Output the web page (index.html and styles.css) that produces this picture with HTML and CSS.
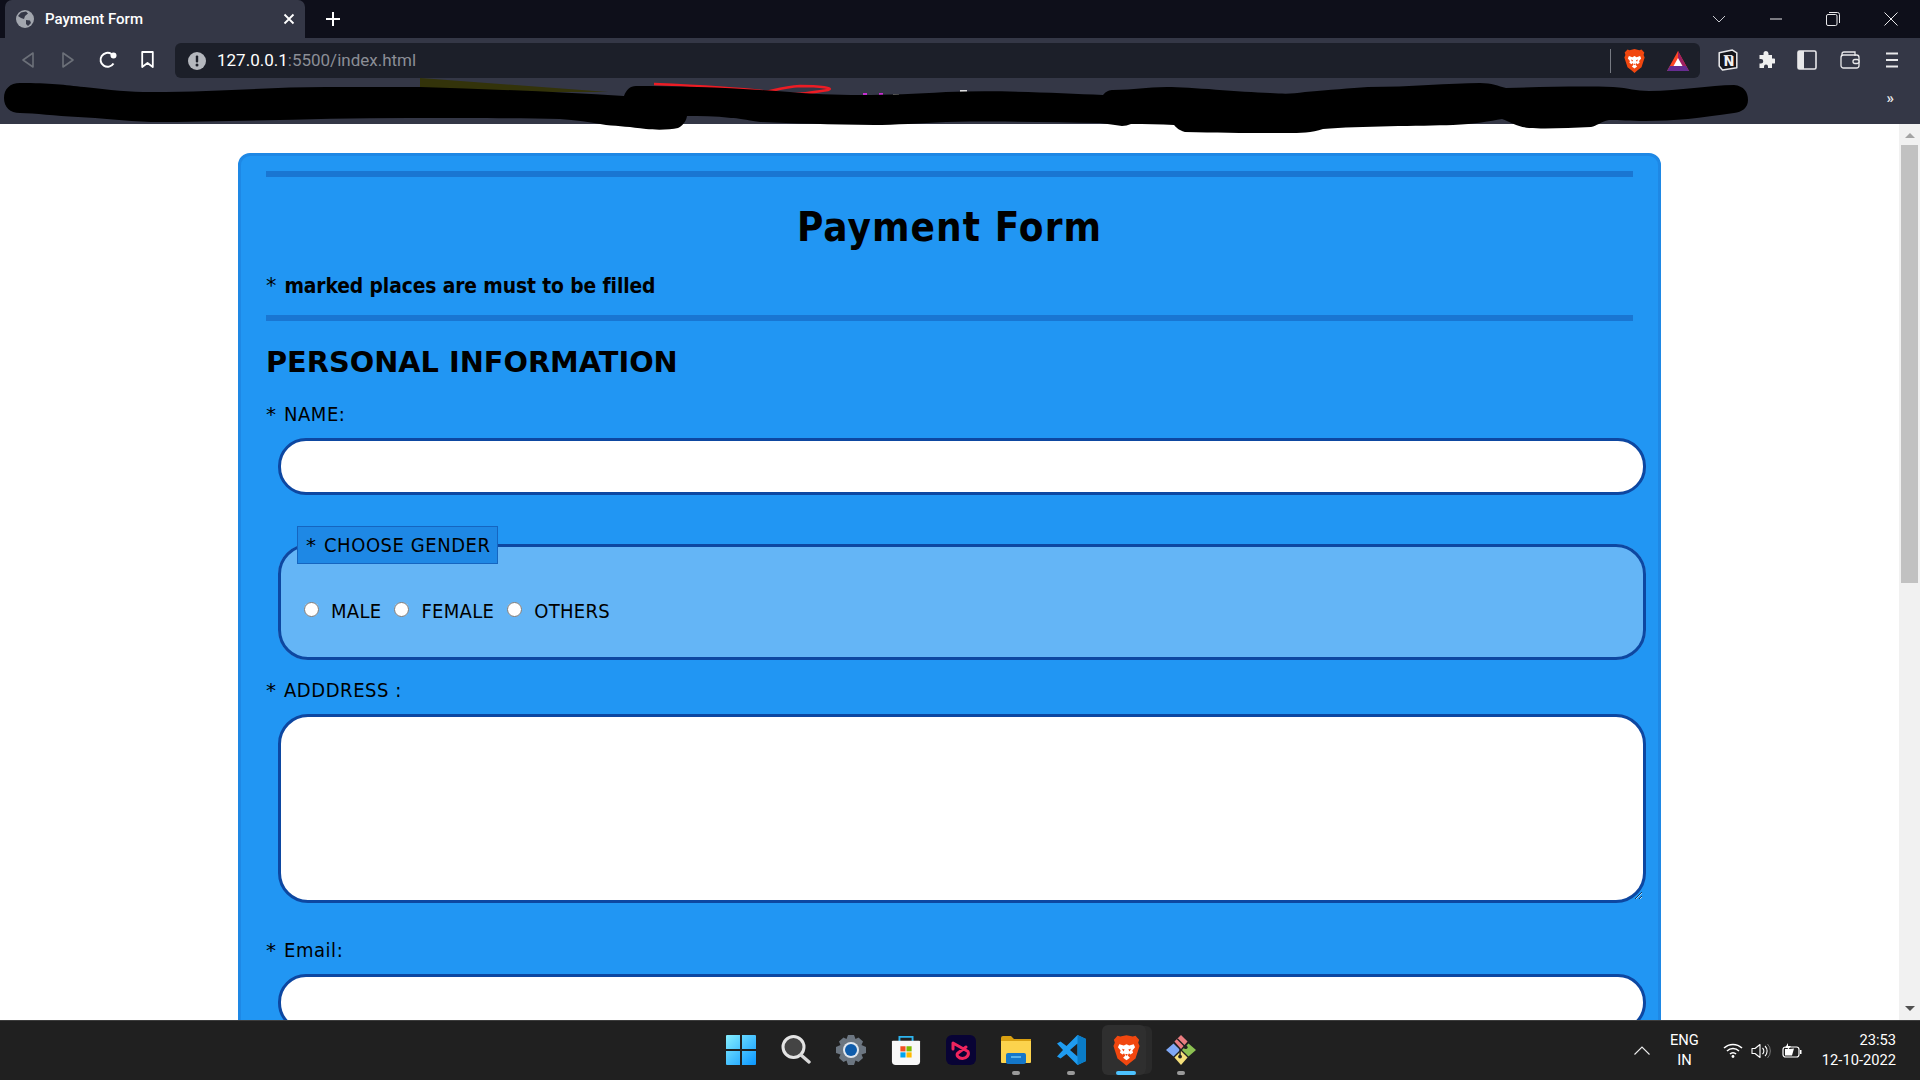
FILE: index.html
```html
<!DOCTYPE html>
<html lang="en">
<head>
<meta charset="utf-8">
<title>Payment Form</title>
<link rel="stylesheet" href="styles.css">
</head>
<body>
<svg class="defs" width="0" height="0" aria-hidden="true">
  <symbol id="brave" viewBox="0 0 30 34">
    <path fill="#f1470f" d="M15 0l7 1.500 3-.8 4 4.300-1 3.500 1.500 3.500-4.500 14-6 4.500L15 34l-4-3.500-6-4.500-4.500-14L2 8.500 1 5 5 .7l3 .8z"/>
    <path fill="#fff" d="M15 10l-3 1.500-5-1.500-1.500 3.500 3 3.500-.8 2.500 3 2 1.500-1.500 1.500 2.500-2.500 2.500 3.800 2.800 3.800-2.800-2.500-2.500 1.500-2.500 1.500 1.500 3-2-.8-2.500 3-3.500L23 10l-5 1.500z"/>
    <path fill="#f1470f" d="M10 15l3 1-1.500 2zM20 15l-3 1 1.500 2zM13.500 21h3L15 23z"/>
  </symbol>
</svg>

<header class="tabstrip">
  <div class="tab">
    <svg class="favicon" viewBox="0 0 18 18"><circle cx="9" cy="9" r="9" fill="#a2a6ae"/><path fill="#343746" d="M5 2.500l5-1 2 2-3 2.500-1 3-3-1-3-2zM10 10l4 .5 1 2.500-3 3-2-2z"/></svg>
    <span class="tab-title">Payment Form</span>
    <svg class="tab-close" viewBox="0 0 12 12"><path d="M1.500 1.500l9 9M10.500 1.500l-9 9" stroke="#fff" stroke-width="1.800"/></svg>
  </div>
  <svg class="new-tab" viewBox="0 0 14 14"><path d="M7 0v14M0 7h14" stroke="#fff" stroke-width="2"/></svg>
  <div class="window-controls">
    <svg class="win-ico win-chev" viewBox="0 0 14 8"><path d="M1 1l6 6 6-6" fill="none" stroke="#c8c9cf"/></svg>
    <svg class="win-ico win-min" viewBox="0 0 14 14"><path d="M1 7h12" stroke="#e8e8ea" stroke-width="1"/></svg>
    <svg class="win-ico win-max" viewBox="0 0 14 14"><rect x=".5" y="2.500" width="10.500" height="11" rx="1.500" fill="none" stroke="#e8e8ea"/><path d="M3 .5h8.500a2 2 0 0 1 2 2V11" fill="none" stroke="#e8e8ea"/></svg>
    <svg class="win-ico win-close" viewBox="0 0 14 14"><path d="M.5.5l13 13M13.500.5l-13 13" stroke="#e8e8ea"/></svg>
  </div>
</header>

<nav class="toolbar">
  <svg class="tb tb-back" viewBox="0 0 12 16"><path d="M11 1v14L1 8z" fill="none" stroke="#6c7079" stroke-width="1.600" stroke-linejoin="round"/></svg>
  <svg class="tb tb-fwd" viewBox="0 0 12 16"><path d="M1 1v14l10-7z" fill="none" stroke="#6c7079" stroke-width="1.600" stroke-linejoin="round"/></svg>
  <svg class="tb tb-reload" viewBox="0 0 18 18"><path d="M14.500 12.500A7 7 0 1 1 12.500 3" fill="none" stroke="#fff" stroke-width="2"/><circle cx="14.500" cy="4.500" r="3" fill="#fff"/></svg>
  <svg class="tb tb-mark" viewBox="0 0 13 17"><path d="M1.200 1h10.600v15l-5.300-4-5.300 4z" fill="none" stroke="#fff" stroke-width="1.800" stroke-linejoin="round"/></svg>
  <div class="omnibox">
    <svg class="info" viewBox="0 0 18 18"><circle cx="9" cy="9" r="9" fill="#b4b7bd"/><rect x="7.800" y="3.500" width="2.400" height="7" rx="1" fill="#1c1f29"/><circle cx="9" cy="13" r="1.500" fill="#1c1f29"/></svg>
    <span class="url"><span class="url-host">127.0.0.1</span>:5500/index.html</span>
    <span class="omni-sep"></span>
    <svg class="omni-brave"><use href="#brave"/></svg>
    <svg class="omni-bat" viewBox="0 0 22 20"><path d="M11 0l11 20H0z" fill="#ff4724"/><path d="M11 0l11 20H11z" fill="#9e1f63"/><path d="M0 20l3-5h16l3 5z" fill="#662d91"/><path d="M11 7l4.500 8h-9z" fill="#fff"/></svg>
  </div>
  <svg class="tb tb-notion" viewBox="0 0 20 20"><path d="M2 3.500L14 1l4 2.500V17l-13 2-3-3.500z" fill="#14151b" stroke="#e8e8ea" stroke-width="1.400" stroke-linejoin="round"/><path d="M6 6h8" stroke="#e8e8ea"/><text class="notion-n" x="11" y="15.500" text-anchor="middle">N</text></svg>
  <svg class="tb tb-puzzle" viewBox="0 0 18 18"><path fill="#f0f0f0" d="M6.500 2.500a2.500 2.500 0 0 1 5 0V4H15v3.500h1.500a2.500 2.500 0 0 1 0 5H15V17h-4v-1.500a2 2 0 0 0-4 0V17H2.500v-4.500H4a2.200 2.200 0 0 0 0-4.500H2.500V4h4z"/></svg>
  <svg class="tb tb-side" viewBox="0 0 20 20"><rect x="1" y="1" width="18" height="18" rx="1.500" fill="none" stroke="#e8e8ea" stroke-width="1.600"/><rect x="1" y="1" width="6" height="18" fill="#e8e8ea"/></svg>
  <svg class="tb tb-wallet" viewBox="0 0 20 18"><path d="M2 5V3a2 2 0 0 1 2-2h11v4" fill="none" stroke="#e8e8ea" stroke-width="1.300"/><rect x="1" y="4" width="18" height="13" rx="2.500" fill="none" stroke="#e8e8ea" stroke-width="1.300"/><rect x="13" y="8.500" width="6" height="4" rx="2" fill="#343746" stroke="#e8e8ea" stroke-width="1.300"/></svg>
  <svg class="tb tb-menu" viewBox="0 0 14 16"><path d="M1 1.500h12M1 8h12M1 14.500h12" stroke="#e8e8ea" stroke-width="1.800"/></svg>
</nav>

<div class="bookmarks"><span class="more">»</span></div>

<main class="viewport">
  <div class="page">
    <form class="card">
      <hr class="rule rule-top">
      <h1 class="title">Payment Form</h1>
      <p class="note"><span class="star">*</span>marked places are must to be filled</p>
      <hr class="rule rule-second">
      <h2 class="section">PERSONAL INFORMATION</h2>

      <label class="field-label field-label-name" for="name"><span class="star">*</span>NAME:</label>
      <input class="text-input" id="name" type="text">

      <fieldset class="gender">
        <legend class="gender-legend"><span class="star">*</span>CHOOSE GENDER</legend>
        <div class="radios">
          <label class="radio"><input type="radio" name="gender"><span>MALE</span></label>
          <label class="radio"><input type="radio" name="gender"><span>FEMALE</span></label>
          <label class="radio"><input type="radio" name="gender"><span>OTHERS</span></label>
        </div>
      </fieldset>

      <label class="field-label field-label-address" for="address"><span class="star">*</span>ADDDRESS :</label>
      <textarea class="text-area" id="address"></textarea>

      <label class="field-label field-label-email" for="email"><span class="star">*</span>Email:</label>
      <input class="text-input" id="email" type="text">
    </form>
  </div>
  <div class="scrollbar">
    <span class="arrow arrow-up"></span>
    <span class="thumb"></span>
    <span class="track-fill"></span>
    <span class="arrow arrow-down"></span>
  </div>
</main>

<footer class="taskbar">
  <div class="task-spacer"></div>
  <div class="task-icons">
    <div class="task-item">
      <svg class="task-ico" viewBox="0 0 30 30"><defs><linearGradient id="win" x1="0" y1="0" x2="1" y2="1"><stop offset="0" stop-color="#86efff"/><stop offset="1" stop-color="#0a96ff"/></linearGradient></defs><path fill="url(#win)" d="M1 0h13v14H0V1a1 1 0 0 1 1-1zM16 0h13a1 1 0 0 1 1 1v13H16zM0 16h14v14H1a1 1 0 0 1-1-1zM16 16h14v13a1 1 0 0 1-1 1H16z"/></svg>
    </div>
    <div class="task-item">
      <svg class="task-ico" viewBox="0 0 30 30"><circle cx="12.500" cy="12" r="10.500" fill="#444" stroke="#e4e4e4" stroke-width="3"/><path d="M20 20l8 7" stroke="#d8d8d8" stroke-width="3.400" stroke-linecap="round"/></svg>
    </div>
    <div class="task-item">
      <svg class="task-ico" viewBox="0 0 30 30"><path fill="#6c7681" d="M12 0h6l1.500 4 3-1.500 4.500 4-1.500 3.500L30 12v6l-4.500 1.500 1.500 3.500-4.500 4-3-1.500L18 30h-6l-1.500-4.500-3 1.500L3 23l1.500-3.500L0 18v-6l4.500-2L3 6.500l4.500-4 3 1.500z"/><circle cx="15" cy="15" r="8" fill="#dfe6ee"/><circle cx="15" cy="15" r="6" fill="#0f5cab"/></svg>
    </div>
    <div class="task-item">
      <svg class="task-ico" viewBox="0 0 30 32"><path d="M8 7V2h14v5" fill="none" stroke="#2db4ee" stroke-width="2"/><path fill="#f8f8f8" d="M1 6h28a1 1 0 0 1 1 1v21a4 4 0 0 1-4 4H4a4 4 0 0 1-4-4V7a1 1 0 0 1 1-1z"/><rect x="9" y="12" width="5.500" height="5.500" fill="#f25022"/><rect x="15.500" y="12" width="5.500" height="5.500" fill="#7fba00"/><rect x="9" y="18.500" width="5.500" height="5.500" fill="#00a4ef"/><rect x="15.500" y="18.500" width="5.500" height="5.500" fill="#ffb900"/></svg>
    </div>
    <div class="task-item">
      <svg class="task-ico" viewBox="0 0 30 30"><rect width="30" height="30" rx="6" fill="#080335"/><path d="M7 14V8l15 8.500c1.500 3.500-1.500 7-5.500 7s-7-3.500-4.500-5.500l8-6" fill="none" stroke="#f0245e" stroke-width="3" stroke-linejoin="round" stroke-linecap="round"/></svg>
    </div>
    <div class="task-item">
      <svg class="task-ico" viewBox="0 0 30 28"><path fill="#d9a011" d="M0 2a2 2 0 0 1 2-2h8l3 3h17v4H0z"/><path fill="#fcd34d" d="M0 5h30v21a1 1 0 0 1-1 1H1a1 1 0 0 1-1-1z"/><rect x="5" y="17" width="20" height="11" rx="2" fill="#1477c9"/><path d="M10 21h10" stroke="#6dc4f5" stroke-width="1.500"/></svg>
      <span class="dot"></span>
    </div>
    <div class="task-item">
      <svg class="task-ico" viewBox="0 0 30 30"><path fill="#1f9cf0" d="M21.500 0L30 4v22l-8.500 4-11-11-6 4.500L1 21.500 7 15 1 8.500 4.500 6.500l6 4.500zM21.500 8.500L14 15l7.500 6.500z"/><path fill="#0a7cc7" d="M21.500 0L30 4v22l-8.500 4z"/></svg>
      <span class="dot"></span>
    </div>
    <div class="task-item task-active">
      <span class="task-stack"></span>
      <span class="task-hl"></span>
      <svg class="task-ico task-brave"><use href="#brave"/></svg>
      <span class="dot dot-active"></span>
    </div>
    <div class="task-item">
      <svg class="task-ico" viewBox="0 0 32 32"><path fill="#7fa8f5" d="M8 9l7 7-7 7-8-7z"/><path fill="#8cc152" d="M24 9l8 7-8 7-7-7z"/><path fill="#f4df7b" d="M16 17l7 7-7 8-7-8z"/><path fill="#ea7d80" d="M16 0l7 7-7 8-7-8z"/><path d="M12 4l8 8M15 15v7" stroke="#222" stroke-width="1.500"/><circle cx="15" cy="23" r="2" fill="#222"/><circle cx="21" cy="13" r="2" fill="#222"/></svg>
      <span class="dot"></span>
    </div>
  </div>
  <div class="tray">
    <svg class="tray-chev" viewBox="0 0 16 9"><path d="M.5 8.500L8 1l7.500 7.500" fill="none" stroke="#eee" stroke-width="1.100"/></svg>
    <div class="lang"><span>ENG</span><span>IN</span></div>
    <svg class="tray-wifi" viewBox="0 0 20 15"><path d="M1 5a13 13 0 0 1 18 0M4 8a8.500 8.500 0 0 1 12 0M7 11a4 4 0 0 1 6 0" fill="none" stroke="#fff" stroke-width="1.500"/><circle cx="10" cy="13.500" r="1.400" fill="#fff"/></svg>
    <svg class="tray-vol" viewBox="0 0 20 16"><path d="M1 5.500h3L9 1.500v13l-5-4H1z" fill="none" stroke="#fff" stroke-width="1.100" stroke-linejoin="round"/><path d="M11.500 5a4 4 0 0 1 0 6M14 3a7 7 0 0 1 0 10" fill="none" stroke="#fff" stroke-width="1.100"/><path d="M16.500 1a10 10 0 0 1 0 14" fill="none" stroke="#777" stroke-width="1"/></svg>
    <svg class="tray-bat" viewBox="0 0 20 15"><rect x="1" y="4" width="16" height="10" rx="2.500" fill="none" stroke="#fff" stroke-width="1.200"/><path d="M3 12.500V6h5l4-.5-2 7z" fill="#fff"/><rect x="18" y="7" width="1.500" height="4" fill="#fff"/><path d="M6 0L3 5h3l-1 3 4-5H6z" fill="#fff"/></svg>
    <div class="clock"><span>23:53</span><span>12-10-2022</span></div>
  </div>
</footer>

<svg class="scribble" viewBox="0 0 1920 140" width="1920" height="140" aria-hidden="true">
  <path fill="#33330a" d="M420 78l188 14H420z"/>
  <rect x="245" y="90" width="17" height="2" fill="#b8860b"/>
  <path fill="none" stroke="#ed1c24" stroke-width="2.500" d="M654 84C700 86 740 88 770 92C790 96 810 93 828 90C835 88 820 86 800 86C785 87 775 90 765 92"/>
  <rect x="863" y="93" width="4" height="3" fill="#c72ed1"/>
  <rect x="879" y="93" width="4" height="3" fill="#c72ed1"/>
  <rect x="893" y="94" width="6" height="2" fill="#bbb"/>
  <rect x="960" y="90" width="7" height="2" fill="#ddd"/>
  <path fill="#000" d="M20 83C50 83 65 85 84 87C110 90 130 92 151 92C220 92 270 87 326 87C360 87 390 87 420 87C490 89 560 92 624 96C626 90 630 86 636 86C680 86 740 88 790 92C810 94 835 95 860 95C890 95 915 94 946 92C1000 90 1060 93 1103 95C1106 91 1110 90 1113 90C1135 90 1145 87 1167 87C1190 87 1240 92 1270 93C1285 94 1292 94 1305 92C1330 90 1350 88 1368 87C1410 87 1450 83 1480 83C1492 83 1498 86 1506 88C1545 87 1580 86 1613 87C1630 88 1635 91 1649 91C1680 91 1710 85 1734 85C1744 86 1748 92 1748 100C1748 108 1742 112 1734 113C1700 118 1675 121 1645 121C1630 121 1620 120 1609 120C1600 122 1597 126 1591 127C1570 128 1545 129 1529 128C1518 127 1510 122 1502 119C1490 121 1475 124 1453 125C1420 126 1360 126 1323 129C1312 133 1300 133 1287 133C1250 133 1220 133 1185 132C1178 130 1176 127 1174 125C1160 124 1145 124 1131 124C1128 125 1125 126 1122 126C1115 125 1108 124 1100 123C1050 122 1000 121 946 122C920 123 895 125 874 125C830 125 790 123 760 122C745 120 738 118 731 118C715 116 700 116 687 116C686 122 682 126 678 128C670 130 655 130 646 129C630 127 620 126 606 125C590 122 575 120 560 119C520 118 470 118 408 118C320 118 230 122 151 122C125 121 100 118 78 117C55 116 35 113 20 113C10 113 4 107 4 98C4 89 10 83 20 83z"/>
</svg>
</body>
</html>
```
FILE: styles.css
```css
* { box-sizing: border-box; }
html, body { margin: 0; height: 100%; }
body {
  position: relative;
  width: 1920px;
  height: 1080px;
  overflow: hidden;
  display: flex;
  flex-direction: column;
  background: #fff;
  font-family: "DejaVu Sans", sans-serif;
}
.defs { position: absolute; }
svg { display: block; flex: none; }

/* Tab strip */
.tabstrip {
  height: 38px;
  flex: none;
  display: flex;
  align-items: center;
  padding-left: 5px;
  background: #0e0f1a;
}
.tab {
  width: 300px;
  height: 38px;
  display: flex;
  align-items: center;
  padding: 0 10px 0 11px;
  border-radius: 7px 7px 0 0;
  background: #343746;
}
.favicon { width: 18px; height: 18px; margin-right: 11px; }
.tab-title {
  flex: 1;
  font: 500 15px/1 Roboto, sans-serif;
  color: #fff;
}
.tab-close { width: 12px; height: 12px; }
.new-tab { width: 14px; height: 14px; margin-left: 21px; }
.window-controls {
  margin-left: auto;
  display: flex;
  align-items: center;
  padding-right: 22px;
}
.win-ico { width: 14px; height: 14px; }
.win-chev { height: 8px; margin-right: 43px; }
.win-min { margin-right: 43px; }
.win-max { margin-right: 44px; }

/* Toolbar */
.toolbar {
  height: 40px;
  flex: none;
  display: flex;
  align-items: flex-start;
  padding-top: 5px;
  background: #343746;
}
.tb-back { width: 12px; height: 16px; margin: 9px 0 0 22px; }
.tb-fwd { width: 12px; height: 16px; margin: 9px 0 0 28px; }
.tb-reload { width: 18px; height: 18px; margin: 8px 0 0 25px; }
.tb-mark { width: 13px; height: 17px; margin: 8px 0 0 23.500px; }
.omnibox {
  width: 1525px;
  height: 35px;
  margin-left: 21.500px;
  display: flex;
  align-items: center;
  padding: 0 11px 0 13px;
  border-radius: 6px;
  background: #1c1f29;
}
.info { width: 18px; height: 18px; margin-right: 11px; }
.url {
  flex: 1;
  font: 400 17px/1 Roboto, sans-serif;
  color: #8b8e96;
}
.url-host { color: #fff; }
.omni-sep { width: 1px; height: 24px; background: #777a82; margin-right: 13.500px; }
.omni-brave { width: 21px; height: 26px; margin-right: 22px; }
.omni-bat { width: 22px; height: 20px; }
.tb-notion { width: 22px; height: 22px; margin: 6px 0 0 17px; }
.notion-n { font: 700 12px "DejaVu Sans", sans-serif; fill: #f0f0f0; }
.tb-puzzle { width: 18px; height: 18px; margin: 8px 0 0 18px; }
.tb-side { width: 20px; height: 20px; margin: 7px 0 0 22px; }
.tb-wallet { width: 20px; height: 18px; margin: 8px 0 0 23px; }
.tb-menu { width: 14px; height: 16px; margin: 9px 0 0 25px; }

/* Bookmarks */
.bookmarks {
  height: 46px;
  flex: none;
  display: flex;
  justify-content: flex-end;
  align-items: center;
  padding: 0 26px 6px 0;
  background: #343746;
}
.more { font: 700 15px/1 Roboto, sans-serif; color: #e8e8ea; }

/* Page */
.viewport {
  flex: 1;
  min-height: 0;
  display: flex;
  overflow: hidden;
}
.page {
  flex: 1;
  min-width: 0;
  overflow: hidden;
  background: #fff;
}
.card {
  width: 1423px;
  margin: 29px 0 0 238px;
  padding: 15px 25px 60px;
  border: 3px solid #1e88e5;
  border-radius: 12px;
  background: #2196f3;
  color: #000;
  font-family: "DejaVu Sans", sans-serif;
  font-stretch: condensed;
}
.star {
  margin-right: 8px;
  font-stretch: normal;
  font-weight: 400;
  letter-spacing: 0;
}
.rule {
  height: 6px;
  margin: 0;
  border: 0;
  background: #1976d2;
}
.rule-second { margin-top: 17px; }
.title {
  margin: 25px 0 0;
  font-size: 40px;
  font-weight: 700;
  line-height: 50px;
  letter-spacing: 1.100px;
  text-align: center;
}
.note {
  margin: 22px 0 0;
  font-size: 20.800px;
  font-weight: 700;
  line-height: 24px;
  letter-spacing: -0.100px;
}
.section {
  margin: 24px 0 0;
  font-size: 28.800px;
  font-stretch: normal;
  font-weight: 700;
  line-height: 34px;
}
.field-label {
  display: block;
  font-size: 20px;
  line-height: 24px;
  letter-spacing: 0.550px;
}
.field-label-name { margin-top: 23px; }
.field-label-address { margin-top: 18px; }
.field-label-email { margin-top: 35px; }
.text-input, .text-area {
  display: block;
  width: calc(100% + 1px);
  margin: 12px 0 0 12px;
  border: 3px solid #0d47a1;
  background: #fff;
  outline: none;
}
.text-input { height: 57px; border-radius: 28px; }
.text-area { height: 189px; border-radius: 30px; }
.gender {
  width: calc(100% + 1px);
  min-width: 0;
  margin: 31px 0 0 12px;
  padding: 35px 16px 34px;
  border: 3px solid #0d47a1;
  border-radius: 30px;
  background: #64b5f6;
}
.gender-legend {
  height: 38px;
  padding: 6px 6px 6px 8px;
  border: 1px solid #1565c0;
  background: #1e88e5;
  font-size: 20px;
  line-height: 24px;
  letter-spacing: 0.550px;
}
.radios {
  display: flex;
  gap: 13px;
  padding-left: 7px;
  font-size: 20px;
  line-height: 24px;
  letter-spacing: 0.300px;
}
.radio {
  display: flex;
  align-items: center;
  gap: 12px;
}
.radio input {
  width: 15px;
  height: 15px;
  margin: -3px 0 0;
}

/* Scrollbar */
.scrollbar {
  width: 21px;
  flex: none;
  display: flex;
  flex-direction: column;
  align-items: center;
  background: #f1f1f1;
}
.arrow { width: 0; height: 0; flex: none; border-left: 5px solid transparent; border-right: 5px solid transparent; }
.arrow-up { margin-top: 9px; border-bottom: 5px solid #a3a3a3; }
.thumb { width: 17px; height: 438px; flex: none; margin-top: 7px; background: #c1c1c1; }
.track-fill { flex: 1; }
.arrow-down { margin-bottom: 9px; border-top: 5px solid #505050; }

/* Taskbar */
.taskbar {
  height: 60px;
  flex: none;
  display: grid;
  grid-template-columns: 1fr auto 1fr;
  border-top: 1px solid #3c3c3c;
  background: #202020;
  color: #fff;
}
.task-icons {
  display: flex;
  gap: 10px;
  align-items: flex-start;
  padding-left: 2px;
}
.task-item {
  position: relative;
  width: 45px;
  height: 59px;
  display: flex;
  justify-content: center;
  padding-top: 14px;
}
.task-ico { width: 30px; height: 30px; position: relative; }
.task-brave { width: 27px; height: 31px; }
.task-hl {
  position: absolute;
  left: -2px;
  top: 4px;
  width: 44px;
  height: 50px;
  border-radius: 6px;
  background: #2f2f2f;
}
.task-stack {
  position: absolute;
  left: 4px;
  top: 5px;
  width: 44px;
  height: 48px;
  border-radius: 6px;
  background: #2a2a2a;
}
.dot {
  position: absolute;
  left: 50%;
  bottom: 5px;
  width: 8px;
  height: 4px;
  margin-left: -4px;
  border-radius: 2px;
  background: #9a9a9a;
}
.dot-active { width: 20px; margin-left: -10px; background: #4cc2ff; }
.tray {
  display: flex;
  align-items: center;
  justify-content: flex-end;
  padding-right: 24px;
}
.tray-chev { width: 16px; height: 9px; margin-right: 20px; }
.lang, .clock {
  display: flex;
  flex-direction: column;
  padding-bottom: 2px;
  font: 400 14.700px/20px Roboto, sans-serif;
}
.lang { align-items: center; margin-right: 24px; }
.clock { align-items: flex-end; margin-left: 20px; }
.tray-wifi { width: 20px; height: 15px; margin-right: 8px; }
.tray-vol { width: 20px; height: 16px; margin-right: 11px; }
.tray-bat { width: 20px; height: 15px; }

/* Redaction scribble lying over the bookmarks bar */
.scribble {
  position: absolute;
  left: 0;
  top: 0;
  pointer-events: none;
}
```
